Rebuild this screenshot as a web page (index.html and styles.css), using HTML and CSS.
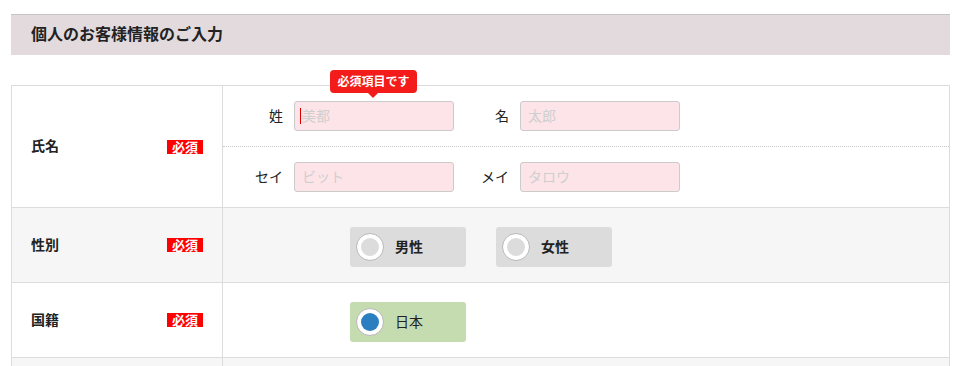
FILE: index.html
```html
<!DOCTYPE html>
<html lang="ja">
<head>
    <meta charset="UTF-8">
    <meta name="viewport" content="width=device-width, initial-scale=1.0">
    <title>お客様情報のご入力</title>
    <link rel="stylesheet" href="styles.css">
</head>
<body>
<div class="wrap">
    <h2 class="section-title">個人のお客様情報のご入力</h2>

    <div class="form-table">
        <!-- 氏名 -->
        <div class="form-row">
            <div class="form-head">
                <span>氏名</span>
                <span class="required">必須</span>
            </div>
            <div class="form-body">
                <div class="name-line">
                    <div class="field">
                        <label class="field-label">姓</label>
                        <span class="field-input is-focus">
                            <input type="text" placeholder="美都">
                            <span class="tip">必須項目です</span>
                        </span>
                    </div>
                    <div class="field">
                        <label class="field-label">名</label>
                        <span class="field-input">
                            <input type="text" placeholder="太郎">
                        </span>
                    </div>
                </div>
                <div class="name-line dotted">
                    <div class="field">
                        <label class="field-label">セイ</label>
                        <span class="field-input">
                            <input type="text" placeholder="ビット">
                        </span>
                    </div>
                    <div class="field">
                        <label class="field-label">メイ</label>
                        <span class="field-input">
                            <input type="text" placeholder="タロウ">
                        </span>
                    </div>
                </div>
            </div>
        </div>

        <!-- 性別 -->
        <div class="form-row gray">
            <div class="form-head">
                <span>性別</span>
                <span class="required">必須</span>
            </div>
            <div class="form-body radios">
                <label class="radio"><span class="dot"></span><span class="radio-text">男性</span></label>
                <label class="radio"><span class="dot"></span><span class="radio-text">女性</span></label>
            </div>
        </div>

        <!-- 国籍 -->
        <div class="form-row">
            <div class="form-head">
                <span>国籍</span>
                <span class="required">必須</span>
            </div>
            <div class="form-body radios">
                <label class="radio checked"><span class="dot"></span><span class="radio-text">日本</span></label>
            </div>
        </div>

        <div class="form-row gray">
            <div class="form-head"></div>
            <div class="form-body radios"></div>
        </div>
    </div>
</div>
</body>
</html>
```

FILE: styles.css
```css
body {
    margin: 0;
    padding-top: 14px;
    font-family: "Noto Sans CJK JP", "Noto Sans", sans-serif;
    color: #222;
    overflow: hidden;
}

.wrap {
    margin: 0 10px 0 11px;
}

.section-title {
    margin: 0;
    height: 40px;
    line-height: 37px;
    padding-left: 20px;
    font-size: 16px;
    font-weight: bold;
    background-color: #e3dadd;
    border-top: 1px solid #c4c4c4;
}

.form-table {
    margin-top: 30px;
    border: 1px solid #dcdcdc;
    border-bottom: none;
}

.form-row {
    display: grid;
    grid-template-columns: 211px 1fr;
    border-bottom: 1px solid #dcdcdc;
}

.form-row.gray {
    background-color: #f6f6f6;
}

.form-head {
    display: flex;
    justify-content: space-between;
    align-items: center;
    padding: 0 19px 3px;
    border-right: 1px solid #dcdcdc;
    font-size: 14px;
    font-weight: bold;
}

.required {
    display: inline-block;
    width: 36px;
    height: 14px;
    line-height: 13px;
    margin-top: 3px;
    text-align: center;
    background-color: #ff0000;
    color: white;
    font-size: 13px;
    font-weight: bold;
}

/* name inputs */
.name-line {
    display: flex;
    gap: 5px;
    padding: 15px 0 15px 10px;
}

.name-line.dotted {
    border-top: 1px dotted #c8c8c8;
}

.field {
    display: flex;
    align-items: center;
}

.field-label {
    width: 50px;
    margin-right: 11px;
    padding-bottom: 3px;
    text-align: right;
    font-size: 14px;
}

.field-input {
    position: relative;
    display: block;
}

.field-input input {
    display: block;
    width: 160px;
    height: 30px;
    box-sizing: border-box;
    padding: 0 7px 3px;
    border: 1px solid #cbcbcb;
    border-radius: 3px;
    background-color: #fde4e8;
    font-family: inherit;
    font-size: 14px;
    outline: none;
}

.field-input input::placeholder {
    color: #cfcfcf;
}

.field-input.is-focus::before {
    content: "";
    position: absolute;
    left: 6px;
    top: 7px;
    width: 1px;
    height: 16px;
    background-color: #e00000;
}

.tip {
    position: absolute;
    left: 36px;
    top: -31px;
    width: 87px;
    height: 23px;
    line-height: 21px;
    text-align: center;
    border-radius: 4px;
    background-color: #f41b1b;
    color: white;
    font-size: 12px;
    font-weight: bold;
}

.tip::after {
    content: "";
    position: absolute;
    left: 38px;
    bottom: -5px;
    border-left: 5px solid transparent;
    border-right: 5px solid transparent;
    border-top: 5px solid #f41b1b;
}

/* radios */
.radios {
    display: flex;
    gap: 30px;
    padding: 19px 0 15px 127px;
    min-height: 40px;
}

.radio {
    display: flex;
    align-items: center;
    gap: 11px;
    width: 116px;
    height: 40px;
    box-sizing: border-box;
    padding-left: 6px;
    border-radius: 3px;
    background-color: #dcdcdc;
    font-size: 14px;
    font-weight: bold;
}

.radio-text {
    padding-bottom: 2px;
}

.radio .dot {
    position: relative;
    width: 28px;
    height: 28px;
    box-sizing: border-box;
    border-radius: 50%;
    border: 1px solid #b8b8b8;
    background-color: white;
}

.radio .dot::after {
    content: "";
    position: absolute;
    left: 4px;
    top: 4px;
    width: 18px;
    height: 18px;
    border-radius: 50%;
    background-color: #dcdcdc;
}

.radio.checked {
    background-color: #c5dbb0;
    font-weight: normal;
}

.radio.checked .dot::after {
    background-color: #2b7fc1;
}
```
